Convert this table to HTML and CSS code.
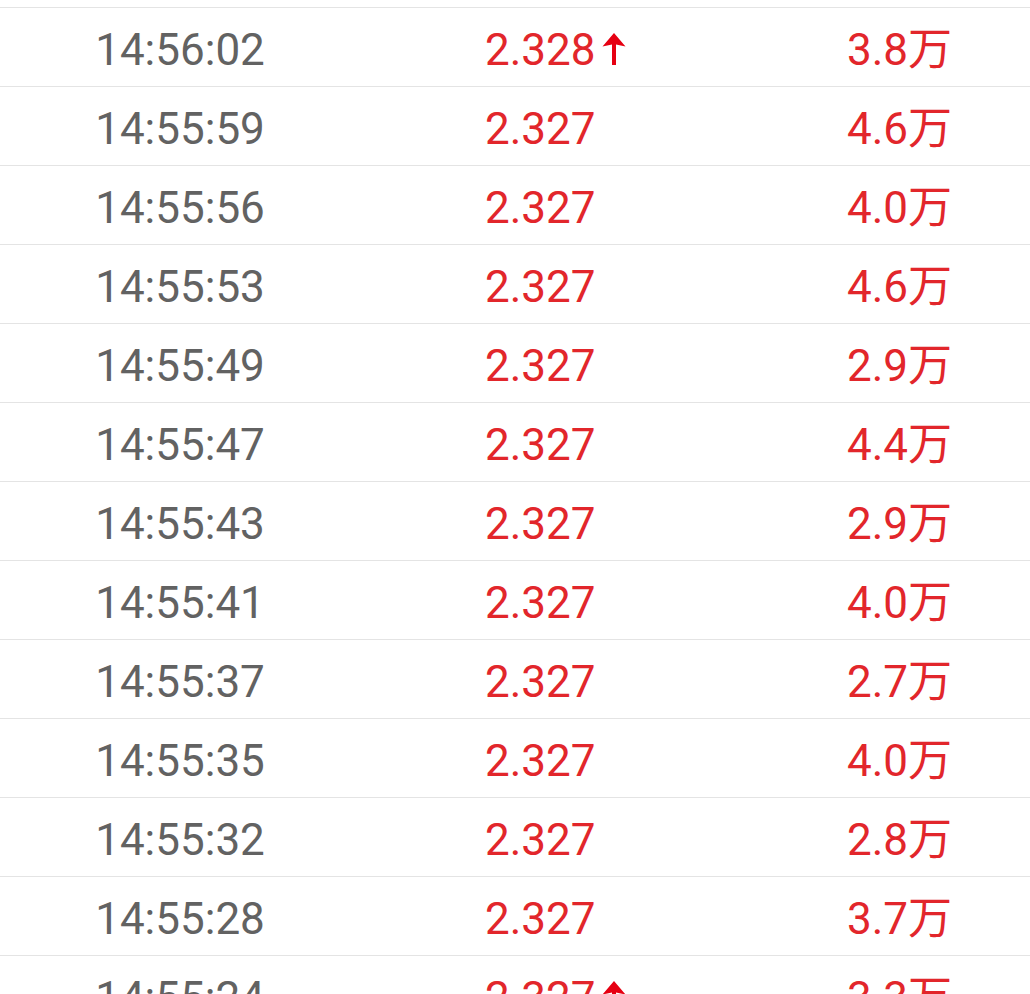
FILE: index.html
```html
<!DOCTYPE html>
<html lang="zh-CN">
<head>
<meta charset="utf-8">
<title>分时成交</title>
<link rel="stylesheet" href="styles.css">
</head>
<body>
<div class="ticks">
  <div class="prev"></div>
  <div class="row"><span class="time">14:56:02</span><span class="price">2.328<svg class="up" viewBox="0 0 24 32" aria-hidden="true"><path d="M12 0 L23.5 13.5 L14 11.5 L14 32 L10 32 L10 11.5 L0.5 13.5 Z"/></svg></span><span class="vol">3.8万</span></div>
  <div class="row"><span class="time">14:55:59</span><span class="price">2.327</span><span class="vol">4.6万</span></div>
  <div class="row"><span class="time">14:55:56</span><span class="price">2.327</span><span class="vol">4.0万</span></div>
  <div class="row"><span class="time">14:55:53</span><span class="price">2.327</span><span class="vol">4.6万</span></div>
  <div class="row"><span class="time">14:55:49</span><span class="price">2.327</span><span class="vol">2.9万</span></div>
  <div class="row"><span class="time">14:55:47</span><span class="price">2.327</span><span class="vol">4.4万</span></div>
  <div class="row"><span class="time">14:55:43</span><span class="price">2.327</span><span class="vol">2.9万</span></div>
  <div class="row"><span class="time">14:55:41</span><span class="price">2.327</span><span class="vol">4.0万</span></div>
  <div class="row"><span class="time">14:55:37</span><span class="price">2.327</span><span class="vol">2.7万</span></div>
  <div class="row"><span class="time">14:55:35</span><span class="price">2.327</span><span class="vol">4.0万</span></div>
  <div class="row"><span class="time">14:55:32</span><span class="price">2.327</span><span class="vol">2.8万</span></div>
  <div class="row"><span class="time">14:55:28</span><span class="price">2.327</span><span class="vol">3.7万</span></div>
  <div class="row"><span class="time">14:55:24</span><span class="price">2.327<svg class="up" viewBox="0 0 24 32" aria-hidden="true"><path d="M12 0 L23.5 13.5 L14 11.5 L14 32 L10 32 L10 11.5 L0.5 13.5 Z"/></svg></span><span class="vol">3.3万</span></div>
</div>
</body>
</html>
```

FILE: styles.css
```css
html, body {
  margin: 0;
  padding: 0;
  background: #ffffff;
}

body {
  font-family: Roboto, "Noto Sans CJK SC", sans-serif;
  overflow: hidden;
}

.ticks {
  display: flex;
  flex-direction: column;
}

.prev {
  height: 7px;
  border-bottom: 1px solid #e4e4e4;
}

.row {
  display: grid;
  grid-template-columns: 360px 1fr auto;
  align-items: center;
  height: 72px;
  padding-top: 6px;
  padding-right: 78px;
  border-bottom: 1px solid #e4e4e4;
  font-size: 44px;
  line-height: 1;
}

.time {
  text-align: center;
  color: #626262;
}

.price {
  display: flex;
  align-items: center;
  padding-left: 125px;
  color: #e2262b;
}

.vol {
  text-align: right;
  color: #e2262b;
}

.up {
  width: 24px;
  height: 32px;
  margin-left: 6px;
  margin-top: -3px;
  fill: #e60012;
}
```
